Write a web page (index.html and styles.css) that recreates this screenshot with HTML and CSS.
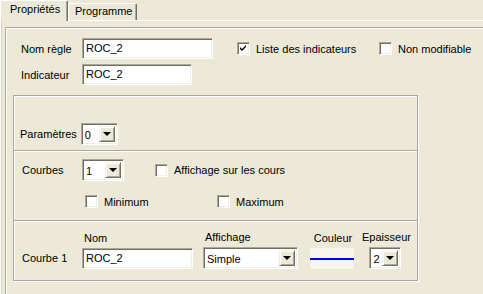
FILE: index.html
```html
<!DOCTYPE html>
<html lang="fr">
<head>
  <meta charset="UTF-8">
  <title>Propriétés</title>
  <link rel="stylesheet" href="styles.css">
</head>
<body>
  <div class="tabs">
    <div class="tab active">Propriétés</div>
    <div class="tab">Programme</div>
  </div>

  <div class="panel">
    <div class="group outer">

      <div class="row">
        <span class="lbl lbl-top">Nom règle</span>
        <div class="edit w-name">ROC_2</div>
        <div class="check-item first">
          <span class="check checked">
            <svg width="7" height="7" viewBox="0 0 7 7"><path d="M0 2 L2 4 L6 0 L6 2 L2 6 L0 4 Z" fill="#000"/></svg>
          </span>
          Liste des indicateurs
        </div>
        <div class="check-item">
          <span class="check"></span>
          Non modifiable
        </div>
      </div>

      <div class="row row-2">
        <span class="lbl lbl-top">Indicateur</span>
        <div class="edit w-ind">ROC_2</div>
      </div>

      <div class="group inner">
        <div class="section sec-params">
          <span class="lbl lbl-params">Paramètres</span>
          <div class="combo w-params">
            <span class="combo-text">0</span>
            <span class="combo-btn"><i class="arrow"></i></span>
          </div>
        </div>

        <div class="section sec-courbes">
          <div class="row">
            <span class="lbl lbl-courbes">Courbes</span>
            <div class="combo w-courbes">
              <span class="combo-text">1</span>
              <span class="combo-btn"><i class="arrow"></i></span>
            </div>
            <div class="check-item affichage">
              <span class="check"></span>
              Affichage sur les cours
            </div>
          </div>
          <div class="row row-minmax">
            <div class="check-item minimum">
              <span class="check"></span>
              Minimum
            </div>
            <div class="check-item">
              <span class="check"></span>
              Maximum
            </div>
          </div>
        </div>

        <div class="section sec-courbe">
          <span class="lbl lbl-courbe">Courbe 1</span>
          <div class="col col-nom">
            <span class="col-title">Nom</span>
            <div class="edit w-nom">ROC_2</div>
          </div>
          <div class="col col-aff">
            <span class="col-title">Affichage</span>
            <div class="combo w-aff">
              <span class="combo-text">Simple</span>
              <span class="combo-btn"><i class="arrow"></i></span>
            </div>
          </div>
          <div class="col col-color">
            <span class="col-title">Couleur</span>
            <div class="swatch"><span class="swatch-line"></span></div>
          </div>
          <div class="col col-ep">
            <span class="col-title">Epaisseur</span>
            <div class="combo w-ep">
              <span class="combo-text">2</span>
              <span class="combo-btn"><i class="arrow"></i></span>
            </div>
          </div>
        </div>
      </div>

    </div>
  </div>
</body>
</html>
```

FILE: styles.css
```css
* {
    box-sizing: border-box;
}

body {
    margin: 0;
    width: 483px;
    height: 294px;
    overflow: hidden;
    background-color: #ECE9D8;
    font-family: "Liberation Sans", Arial, sans-serif;
    font-size: 11px;
    color: #000;
}

/* tab strip */

.tabs {
    display: flex;
    align-items: flex-end;
    height: 20px;
}

.tab {
    height: 17px;
    width: 69px;
    padding-left: 6px;
    line-height: 15px;
    border-top: 1px solid #fff;
    border-left: 1px solid #fff;
    border-right: 1px solid #716F64;
    box-shadow: inset -1px 0 #ACA899;
    border-radius: 2px 2px 0 0;
}

.tab.active {
    position: relative;
    z-index: 1;
    width: 68px;
    height: 21px;
    margin-bottom: -1px;
    padding-left: 9px;
    line-height: 17px;
    background-color: #ECE9D8;
}

.panel {
    height: 274px;
    border-top: 1px solid #fff;
    border-left: 1px solid #fff;
    box-shadow: inset 1px 0 #D6D2C2;
}

/* etched group boxes */

.group {
    border: 1px solid #ACA899;
    box-shadow: inset 1px 1px #fff, 1px 1px #fff;
}

/* the outer box runs on past the window, so it has no right or bottom edge */
.outer {
    height: 267px;
    margin: 6px 0 0 4px;
    padding: 10px 0 0 15px;
    border-right: none;
    border-bottom: none;
}

.inner {
    width: 405px;
    height: 186px;
    margin: 10px 0 0 -8px;
}

.row {
    display: flex;
    align-items: center;
}

.row-2 {
    margin-top: 5px;
}

.lbl {
    white-space: nowrap;
}

.lbl-top {
    width: 61px;
}

/* edit boxes */

.edit {
    height: 21px;
    padding: 0 3px;
    line-height: 19px;
    background-color: #fff;
    border: 1px solid;
    border-color: #ACA899 #fff #fff #ACA899;
    box-shadow: inset 1px 1px #716F64, inset -1px -1px #F1EFE2;
}

.w-name { width: 131px; }
.w-ind { width: 110px; }
.w-nom { width: 111px; }

/* check boxes */

.check-item {
    display: flex;
    align-items: center;
    gap: 6px;
    white-space: nowrap;
}

.check-item.first {
    width: 142px;
    margin-left: 24px;
}

.check {
    display: flex;
    align-items: center;
    justify-content: center;
    width: 13px;
    height: 13px;
    background-color: #fff;
    border: 1px solid;
    border-color: #ACA899 #fff #fff #ACA899;
    box-shadow: inset 1px 1px #716F64, inset -1px -1px #F1EFE2;
}

/* combo boxes */

.combo {
    display: flex;
    height: 22px;
    background-color: #fff;
    border: 1px solid;
    border-color: #ACA899 #fff #fff #ACA899;
    box-shadow: inset 1px 1px #716F64, inset -1px -1px #F1EFE2;
    padding: 2px;
}

.combo-text {
    flex: 1;
    line-height: 18px;
    padding-left: 1px;
    white-space: nowrap;
    overflow: hidden;
}

.combo-btn {
    display: flex;
    align-items: center;
    justify-content: center;
    width: 16px;
    background-color: #ECE9D8;
    border: 1px solid;
    border-color: #F1EFE2 #716F64 #716F64 #F1EFE2;
    box-shadow: inset 1px 1px #fff, inset -1px -1px #ACA899;
}

.arrow {
    width: 0;
    height: 0;
    border-left: 4px solid transparent;
    border-right: 4px solid transparent;
    border-top: 4px solid #000;
}

.w-params { width: 37px; }
.w-courbes { width: 42px; }
.w-aff { width: 95px; }
.w-ep { width: 32px; }

/* sections of the inner box */

.section + .section {
    border-top: 1px solid #ACA899;
    box-shadow: inset 0 1px #fff;
}

.sec-params {
    display: flex;
    align-items: center;
    height: 54px;
    padding: 21px 0 0 6px;
}

.sec-params .lbl {
    margin-right: 4px;
}

.sec-courbes {
    height: 70px;
    padding: 8px 0 0 8px;
}

.lbl-courbes {
    width: 60px;
}

.affichage {
    margin-left: 31px;
}

.row-minmax {
    margin-top: 14px;
    padding-left: 63px;
}

.minimum {
    width: 132px;
}

.sec-courbe {
    display: flex;
    align-items: flex-end;
    height: 60px;
    padding: 0 0 11px 8px;
}

.lbl-courbe {
    width: 60px;
    line-height: 21px;
}

.col {
    display: flex;
    flex-direction: column;
    align-items: center;
    gap: 3px;
}

.col-nom,
.col-aff {
    align-items: flex-start;
}

.col-title {
    line-height: 13px;
    padding-left: 2px;
    white-space: nowrap;
}

.col-aff {
    margin-left: 10px;
}

.col-color {
    margin-left: 12px;
}

.col-ep {
    margin-left: 6px;
}

.swatch {
    display: flex;
    align-items: center;
    width: 44px;
    height: 21px;
    background-color: #F7F6EC;
}

.swatch-line {
    width: 100%;
    height: 2px;
    background-color: #0000FF;
}
```
